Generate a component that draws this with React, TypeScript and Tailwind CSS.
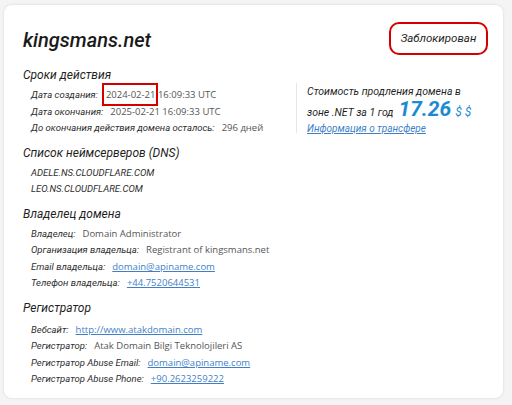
const label = "italic font-['Roboto',sans-serif] text-[#2e2e2e]"
const value = 'text-[#555]'
const link = 'text-[#3f7fc8] underline'

function Row({ name, children }: { name: string; children: React.ReactNode }) {
  return (
    <div className="flex items-center h-[16.5px] whitespace-nowrap">
      <span className={label}>{name}</span>
      <span className={`ml-[7px] ${value}`}>{children}</span>
    </div>
  )
}

function Heading({ children, className = '' }: { children: React.ReactNode; className?: string }) {
  return (
    <div className={`italic font-['Roboto',sans-serif] text-[12px] leading-[20px] text-[#1f1f1f] ${className}`}>
      {children}
    </div>
  )
}

export default function App() {
  return (
    <div className="w-[512px] h-[405px] bg-[#f4f4f4] pt-[5px] pl-[4px] font-['Open_Sans',sans-serif] text-[9.5px]">
      <div className="w-[499px] h-[393px] bg-white rounded-[8px] shadow-[0_0_3px_rgba(0,0,0,0.12)] pl-[19px] pr-[15px] pt-[17px]">
        {/* Header */}
        <div className="flex items-center justify-between h-[33px]">
          <div className="italic font-medium font-['Roboto',sans-serif] text-[20px] text-[#1a1a1a] mt-[3px]">kingsmans.net</div>
          <div className="w-[99px] h-[33px] rounded-[10px] border-2 border-[#d40000] flex items-center justify-center italic font-['Roboto',sans-serif] text-[11.5px] text-[#1f1f1f]">
            Заблокирован
          </div>
        </div>

        {/* Сроки действия + стоимость */}
        <div className="flex mt-[10px]">
          <div className="w-[273px]">
            <Heading>Сроки действия</Heading>
            <div className="pl-[8px] mt-[2px]">
              <div className="flex items-center h-[16.5px] whitespace-nowrap">
                <span className={label}>Дата создания:</span>
                <span className={`ml-[8px] ${value}`}>
                  <span className="relative inline-block">
                    2024-02-21
                    <span className="absolute -left-[4px] -top-[5px] w-[56px] h-[23px] border-2 border-[#d40000]" />
                  </span>{' '}
                  16:09:33 UTC
                </span>
              </div>
              <Row name="Дата окончания:">2025-02-21 16:09:33 UTC</Row>
              <Row name="До окончания действия домена осталось:">296 дней</Row>
            </div>
          </div>
          <div className="mt-[18px] h-[50px] border-l border-[#e6e6e6] pl-[10px] pt-[2px] font-['Roboto',sans-serif]">
            <div className="italic text-[10.5px] leading-[14px] text-[#1f1f1f]">Стоимость продления домена в</div>
            <div className="flex items-baseline italic text-[10.5px] text-[#1f1f1f] leading-[20px]">
              <span>зоне .NET за 1 год</span>
              <span className="ml-[5px] font-bold text-[21px] text-[#1c8ad2]">17.26</span>
              <span className="ml-[4px] text-[12px] text-[#1c8ad2]">$ $</span>
            </div>
            <div className={`italic text-[10px] leading-[12px] ${link}`}>Информация о трансфере</div>
          </div>
        </div>

        {/* DNS */}
        <Heading className="mt-[6px]">Список неймсерверов (DNS)</Heading>
        <div className={`pl-[8px] mt-[2px] ${label}`}>
          <div className="h-[16.5px] flex items-center">ADELE.NS.CLOUDFLARE.COM</div>
          <div className="h-[16.5px] flex items-center">LEO.NS.CLOUDFLARE.COM</div>
        </div>

        {/* Владелец */}
        <Heading className="mt-[6px]">Владелец домена</Heading>
        <div className="pl-[8px] mt-[2px]">
          <Row name="Владелец:">Domain Administrator</Row>
          <Row name="Организация владельца:">Registrant of kingsmans.net</Row>
          <Row name="Email владельца:"><span className={link}>domain@apiname.com</span></Row>
          <Row name="Телефон владельца:"><span className={link}>+44.7520644531</span></Row>
        </div>

        {/* Регистратор */}
        <Heading className="mt-[6px]">Регистратор</Heading>
        <div className="pl-[8px] mt-[4px]">
          <Row name="Вебсайт:"><span className={link}>http://www.atakdomain.com</span></Row>
          <Row name="Регистратор:">Atak Domain Bilgi Teknolojileri AS</Row>
          <Row name="Регистратор Abuse Email:"><span className={link}>domain@apiname.com</span></Row>
          <Row name="Регистратор Abuse Phone:"><span className={link}>+90.2623259222</span></Row>
        </div>
      </div>
    </div>
  )
}
